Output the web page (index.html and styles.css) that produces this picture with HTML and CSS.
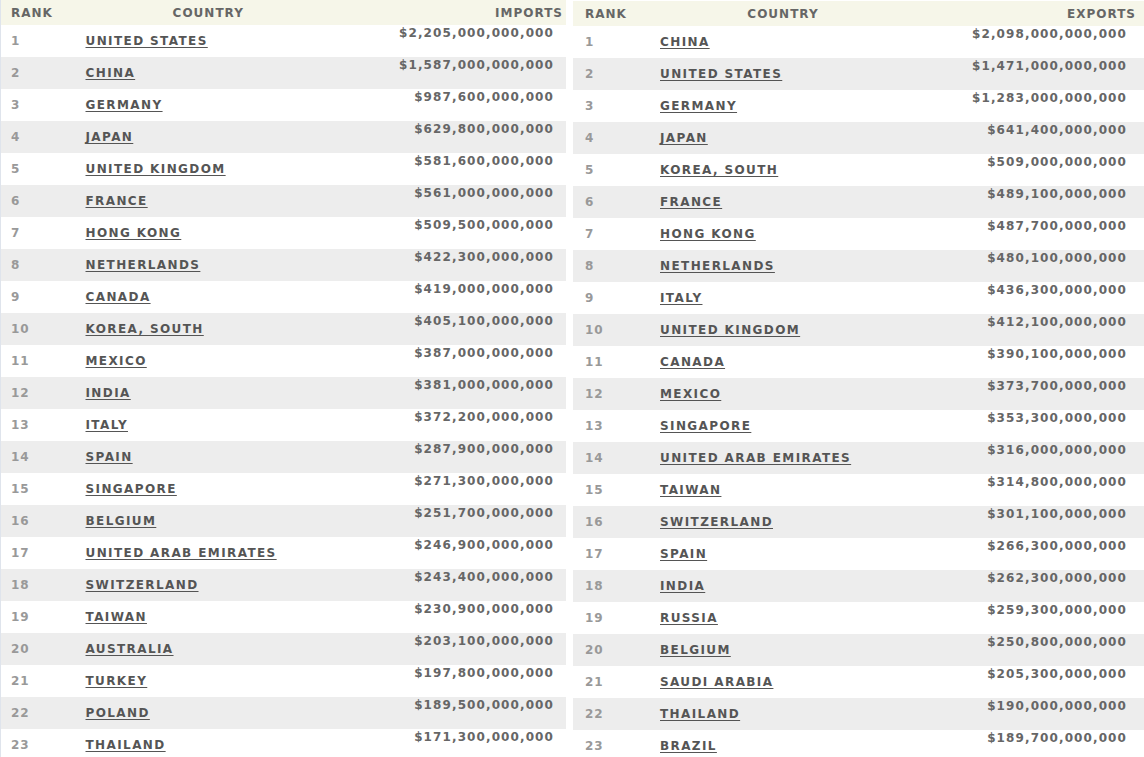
FILE: index.html
```html
<!DOCTYPE html>
<html>
<head>
<meta charset="utf-8">
<link rel="stylesheet" href="styles.css">
</head>
<body>
<div class="wrap">
<table class="rank-table left">
<thead><tr><th class="c-rank">RANK</th><th class="c-country">COUNTRY</th><th class="c-val">IMPORTS</th></tr></thead>
<tbody>
<tr><td class="c-rank">1</td><td class="c-country"><a href="#">UNITED STATES</a></td><td class="c-val">$2,205,000,000,000</td></tr>
<tr><td class="c-rank">2</td><td class="c-country"><a href="#">CHINA</a></td><td class="c-val">$1,587,000,000,000</td></tr>
<tr><td class="c-rank">3</td><td class="c-country"><a href="#">GERMANY</a></td><td class="c-val">$987,600,000,000</td></tr>
<tr><td class="c-rank">4</td><td class="c-country"><a href="#">JAPAN</a></td><td class="c-val">$629,800,000,000</td></tr>
<tr><td class="c-rank">5</td><td class="c-country"><a href="#">UNITED KINGDOM</a></td><td class="c-val">$581,600,000,000</td></tr>
<tr><td class="c-rank">6</td><td class="c-country"><a href="#">FRANCE</a></td><td class="c-val">$561,000,000,000</td></tr>
<tr><td class="c-rank">7</td><td class="c-country"><a href="#">HONG KONG</a></td><td class="c-val">$509,500,000,000</td></tr>
<tr><td class="c-rank">8</td><td class="c-country"><a href="#">NETHERLANDS</a></td><td class="c-val">$422,300,000,000</td></tr>
<tr><td class="c-rank">9</td><td class="c-country"><a href="#">CANADA</a></td><td class="c-val">$419,000,000,000</td></tr>
<tr><td class="c-rank">10</td><td class="c-country"><a href="#">KOREA, SOUTH</a></td><td class="c-val">$405,100,000,000</td></tr>
<tr><td class="c-rank">11</td><td class="c-country"><a href="#">MEXICO</a></td><td class="c-val">$387,000,000,000</td></tr>
<tr><td class="c-rank">12</td><td class="c-country"><a href="#">INDIA</a></td><td class="c-val">$381,000,000,000</td></tr>
<tr><td class="c-rank">13</td><td class="c-country"><a href="#">ITALY</a></td><td class="c-val">$372,200,000,000</td></tr>
<tr><td class="c-rank">14</td><td class="c-country"><a href="#">SPAIN</a></td><td class="c-val">$287,900,000,000</td></tr>
<tr><td class="c-rank">15</td><td class="c-country"><a href="#">SINGAPORE</a></td><td class="c-val">$271,300,000,000</td></tr>
<tr><td class="c-rank">16</td><td class="c-country"><a href="#">BELGIUM</a></td><td class="c-val">$251,700,000,000</td></tr>
<tr><td class="c-rank">17</td><td class="c-country"><a href="#">UNITED ARAB EMIRATES</a></td><td class="c-val">$246,900,000,000</td></tr>
<tr><td class="c-rank">18</td><td class="c-country"><a href="#">SWITZERLAND</a></td><td class="c-val">$243,400,000,000</td></tr>
<tr><td class="c-rank">19</td><td class="c-country"><a href="#">TAIWAN</a></td><td class="c-val">$230,900,000,000</td></tr>
<tr><td class="c-rank">20</td><td class="c-country"><a href="#">AUSTRALIA</a></td><td class="c-val">$203,100,000,000</td></tr>
<tr><td class="c-rank">21</td><td class="c-country"><a href="#">TURKEY</a></td><td class="c-val">$197,800,000,000</td></tr>
<tr><td class="c-rank">22</td><td class="c-country"><a href="#">POLAND</a></td><td class="c-val">$189,500,000,000</td></tr>
<tr><td class="c-rank">23</td><td class="c-country"><a href="#">THAILAND</a></td><td class="c-val">$171,300,000,000</td></tr>
</tbody>
</table>
<table class="rank-table right">
<thead><tr><th class="c-rank">RANK</th><th class="c-country">COUNTRY</th><th class="c-val">EXPORTS</th></tr></thead>
<tbody>
<tr><td class="c-rank">1</td><td class="c-country"><a href="#">CHINA</a></td><td class="c-val">$2,098,000,000,000</td></tr>
<tr><td class="c-rank">2</td><td class="c-country"><a href="#">UNITED STATES</a></td><td class="c-val">$1,471,000,000,000</td></tr>
<tr><td class="c-rank">3</td><td class="c-country"><a href="#">GERMANY</a></td><td class="c-val">$1,283,000,000,000</td></tr>
<tr><td class="c-rank">4</td><td class="c-country"><a href="#">JAPAN</a></td><td class="c-val">$641,400,000,000</td></tr>
<tr><td class="c-rank">5</td><td class="c-country"><a href="#">KOREA, SOUTH</a></td><td class="c-val">$509,000,000,000</td></tr>
<tr><td class="c-rank">6</td><td class="c-country"><a href="#">FRANCE</a></td><td class="c-val">$489,100,000,000</td></tr>
<tr><td class="c-rank">7</td><td class="c-country"><a href="#">HONG KONG</a></td><td class="c-val">$487,700,000,000</td></tr>
<tr><td class="c-rank">8</td><td class="c-country"><a href="#">NETHERLANDS</a></td><td class="c-val">$480,100,000,000</td></tr>
<tr><td class="c-rank">9</td><td class="c-country"><a href="#">ITALY</a></td><td class="c-val">$436,300,000,000</td></tr>
<tr><td class="c-rank">10</td><td class="c-country"><a href="#">UNITED KINGDOM</a></td><td class="c-val">$412,100,000,000</td></tr>
<tr><td class="c-rank">11</td><td class="c-country"><a href="#">CANADA</a></td><td class="c-val">$390,100,000,000</td></tr>
<tr><td class="c-rank">12</td><td class="c-country"><a href="#">MEXICO</a></td><td class="c-val">$373,700,000,000</td></tr>
<tr><td class="c-rank">13</td><td class="c-country"><a href="#">SINGAPORE</a></td><td class="c-val">$353,300,000,000</td></tr>
<tr><td class="c-rank">14</td><td class="c-country"><a href="#">UNITED ARAB EMIRATES</a></td><td class="c-val">$316,000,000,000</td></tr>
<tr><td class="c-rank">15</td><td class="c-country"><a href="#">TAIWAN</a></td><td class="c-val">$314,800,000,000</td></tr>
<tr><td class="c-rank">16</td><td class="c-country"><a href="#">SWITZERLAND</a></td><td class="c-val">$301,100,000,000</td></tr>
<tr><td class="c-rank">17</td><td class="c-country"><a href="#">SPAIN</a></td><td class="c-val">$266,300,000,000</td></tr>
<tr><td class="c-rank">18</td><td class="c-country"><a href="#">INDIA</a></td><td class="c-val">$262,300,000,000</td></tr>
<tr><td class="c-rank">19</td><td class="c-country"><a href="#">RUSSIA</a></td><td class="c-val">$259,300,000,000</td></tr>
<tr><td class="c-rank">20</td><td class="c-country"><a href="#">BELGIUM</a></td><td class="c-val">$250,800,000,000</td></tr>
<tr><td class="c-rank">21</td><td class="c-country"><a href="#">SAUDI ARABIA</a></td><td class="c-val">$205,300,000,000</td></tr>
<tr><td class="c-rank">22</td><td class="c-country"><a href="#">THAILAND</a></td><td class="c-val">$190,000,000,000</td></tr>
<tr><td class="c-rank">23</td><td class="c-country"><a href="#">BRAZIL</a></td><td class="c-val">$189,700,000,000</td></tr>
</tbody>
</table>
</div>
</body>
</html>
```
FILE: styles.css
```css
html, body {
  margin: 0;
  padding: 0;
  background: #ffffff;
}
body {
  font-family: Verdana, "DejaVu Sans", sans-serif;
  overflow: hidden;
}
.wrap {
  display: flex;
  gap: 7px;
  align-items: flex-start;
}
.rank-table {
  border-collapse: collapse;
  table-layout: fixed;
}
.rank-table.left {
  width: 566px;
  border-left: 1px solid #dfe4ec;
}
.rank-table.right {
  width: 571px;
  margin-top: 1px;
}
.rank-table th,
.rank-table td {
  box-sizing: border-box;
  padding: 0;
}
.rank-table th {
  height: 25px;
  background: #f6f6e9;
  color: #666666;
  font-size: 12px;
  font-weight: bold;
  letter-spacing: 1px;
  vertical-align: middle;
}
.rank-table th.c-rank {
  text-align: left;
  padding-left: 10px;
}
.rank-table th.c-country {
  text-align: center;
}
.rank-table th.c-val {
  text-align: right;
  padding-right: 3px;
}
.c-rank { width: 85px; }
.c-country { width: 246px; }
.right .c-rank { width: 87px; }
.rank-table.right th.c-rank,
.rank-table.right td.c-rank {
  padding-left: 12px;
}
.rank-table.right th.c-val {
  padding-right: 8px;
}
.rank-table td {
  height: 32px;
}
.rank-table tbody tr:nth-child(even) td {
  background: #ededed;
}
.rank-table td.c-rank {
  padding-left: 10px;
  color: #999999;
  font-size: 12px;
  font-weight: bold;
  letter-spacing: 1px;
  vertical-align: middle;
}
.rank-table td.c-country {
  vertical-align: middle;
  padding-bottom: 3px;
}
.rank-table td.c-country a {
  color: #555555;
  font-size: 12px;
  font-weight: bold;
  letter-spacing: 1.4px;
  text-decoration: underline;
  text-underline-offset: 2px;
  text-decoration-thickness: 1px;
}
.rank-table td.c-val {
  text-align: right;
  vertical-align: top;
  padding-top: 1px;
  padding-right: 12px;
  color: #666666;
  font-size: 12px;
  font-weight: bold;
  letter-spacing: 1.1px;
}
.rank-table.right td.c-val {
  padding-right: 17px;
}
```
